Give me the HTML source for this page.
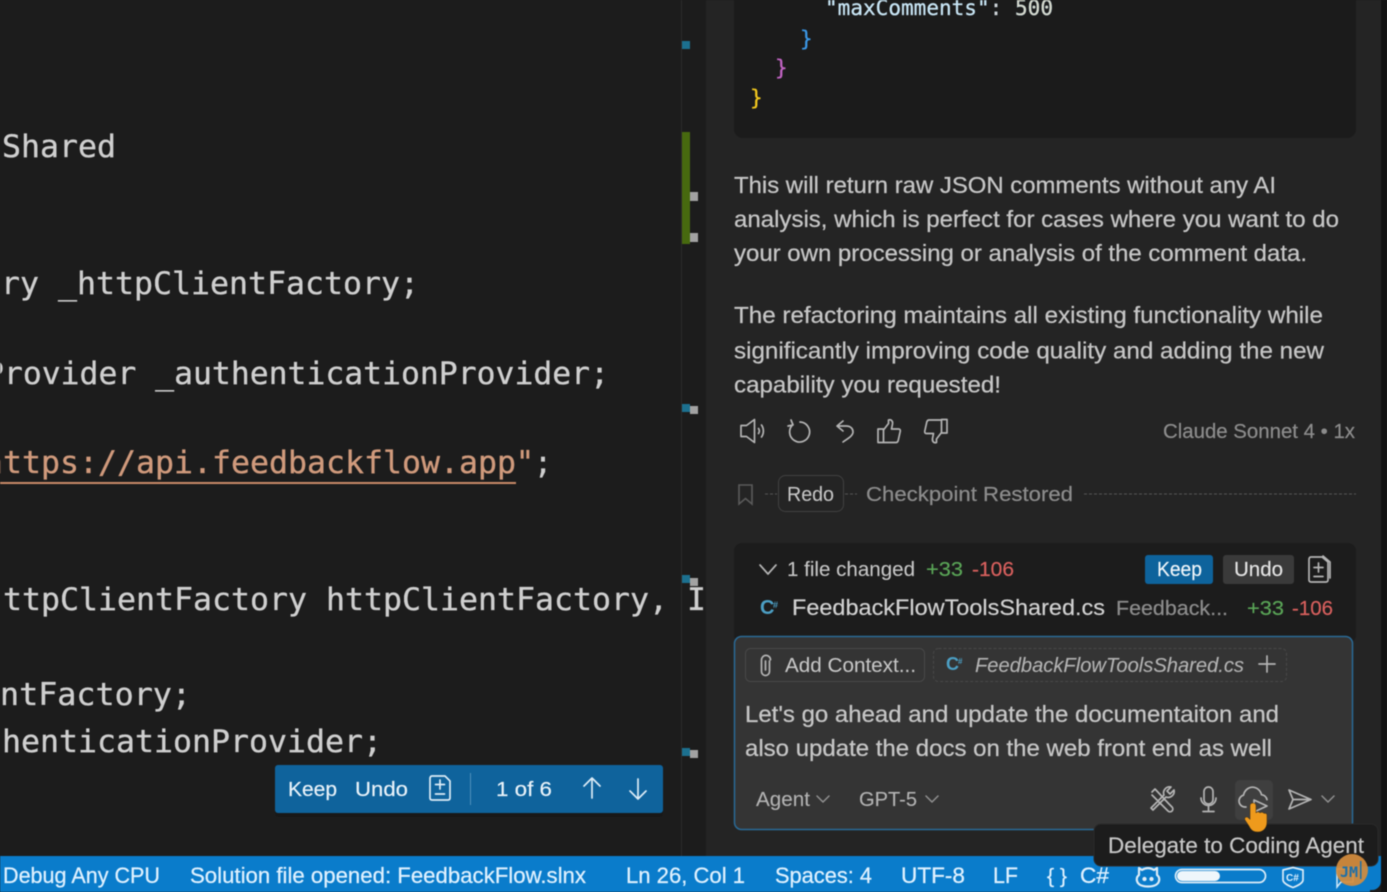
<!DOCTYPE html>
<html><head><meta charset="utf-8"><title>Editor</title>
<style>
html,body{margin:0;padding:0;background:#1c1c1c;width:1387px;height:892px;overflow:hidden}
svg{display:block;filter:blur(.45px)}
.m{font-family:"DejaVu Sans Mono","Liberation Mono",monospace;font-size:31.4px;fill:#cfcfcf;stroke:#cfcfcf;stroke-width:.35}
.j{font-family:"DejaVu Sans Mono","Liberation Mono",monospace;font-size:21px;stroke:currentColor;stroke-width:.3}
.s{font-family:"Liberation Sans",sans-serif;font-size:23px;fill:#c6c6c6;stroke:#c6c6c6;stroke-width:.25}
.u{font-family:"Liberation Sans",sans-serif;font-size:20.5px;fill:#c8c8c8;stroke:#999;stroke-width:.18}
.g{fill:#8c8c8c}
.st{font-family:"Liberation Sans",sans-serif;font-size:22px;fill:#dff1ff;stroke:#dff1ff;stroke-width:.25}
.i{fill:none;stroke:#b4b4b4;stroke-width:1.7;stroke-linecap:round;stroke-linejoin:round}
.w{fill:none;stroke:#dcecf7;stroke-width:1.7;stroke-linecap:round;stroke-linejoin:round}
</style></head><body>
<svg xmlns="http://www.w3.org/2000/svg" width="1387" height="892" viewBox="0 0 1387 892">
<rect width="1387" height="892" fill="#1c1c1c"/>
<rect x="681" width="1" height="857" fill="#2b2b2b"/>
<rect x="706" width="675" height="857" fill="#242424"/>
<rect x="1381" width="6" height="892" fill="#121212"/>

<!-- Editor code -->
<text class="m" x="2" y="157" textLength="114" lengthAdjust="spacingAndGlyphs">Shared</text>
<text class="m" x="1" y="294" textLength="418" lengthAdjust="spacingAndGlyphs">ry _httpClientFactory;</text>
<text class="m" x="-15" y="384" textLength="624" lengthAdjust="spacingAndGlyphs">Provider _authenticationProvider;</text>
<text class="m" x="-16" y="473" textLength="532" lengthAdjust="spacingAndGlyphs" style="fill:#d09a7c;stroke:#d09a7c">https://api.feedbackflow.app</text>
<text class="m" x="516" y="473" textLength="36" lengthAdjust="spacingAndGlyphs"><tspan style="fill:#d09a7c;stroke:#d09a7c">"</tspan>;</text>
<rect x="0" y="482" width="516" height="2" fill="#c98a68"/>
<text class="m" x="3" y="610" textLength="703" lengthAdjust="spacingAndGlyphs">ttpClientFactory httpClientFactory, I</text>
<text class="m" x="0" y="705" textLength="191" lengthAdjust="spacingAndGlyphs">ntFactory;</text>
<text class="m" x="2" y="752" textLength="380" lengthAdjust="spacingAndGlyphs">henticationProvider;</text>

<!-- Overview ruler -->
<rect x="682" y="41" width="8" height="8" fill="#1c708f"/>
<rect x="682" y="132" width="8" height="112" fill="#47690f"/>
<rect x="690" y="192" width="8" height="9" fill="#a2a2a2"/>
<rect x="690" y="233" width="8" height="9" fill="#a2a2a2"/>
<rect x="682" y="404" width="8" height="8" fill="#1c708f"/>
<rect x="690" y="406" width="8" height="8" fill="#a2a2a2"/>
<rect x="682" y="575" width="8" height="8" fill="#1c708f"/>
<rect x="690" y="578" width="8" height="8" fill="#a2a2a2"/>
<rect x="682" y="748" width="8" height="8" fill="#1c708f"/>
<rect x="690" y="750" width="8" height="8" fill="#a2a2a2"/>

<!-- JSON block -->
<rect x="734" y="-20" width="622" height="158" rx="9" fill="#1b1b1b"/>
<text class="j" x="825" y="15" textLength="228" lengthAdjust="spacingAndGlyphs" fill="#d4d4d4" color="#c8e2f0"><tspan fill="#c8e6f6">"maxComments"</tspan>: <tspan fill="#d8d8c8">500</tspan></text>
<text class="j" x="800" y="46" fill="#3b97e6" color="#3b97e6">}</text>
<text class="j" x="775" y="75" fill="#c264c4" color="#c264c4">}</text>
<text class="j" x="750" y="105" fill="#f2c81e" color="#f2c81e">}</text>

<!-- Chat text -->
<text class="s" x="734" y="193" textLength="542" lengthAdjust="spacingAndGlyphs">This will return raw JSON comments without any AI</text>
<text class="s" x="734" y="227" textLength="605" lengthAdjust="spacingAndGlyphs">analysis, which is perfect for cases where you want to do</text>
<text class="s" x="734" y="261" textLength="573" lengthAdjust="spacingAndGlyphs">your own processing or analysis of the comment data.</text>
<text class="s" x="734" y="323" textLength="589" lengthAdjust="spacingAndGlyphs">The refactoring maintains all existing functionality while</text>
<text class="s" x="734" y="358.5" textLength="590" lengthAdjust="spacingAndGlyphs">significantly improving code quality and adding the new</text>
<text class="s" x="734" y="392.5" textLength="267" lengthAdjust="spacingAndGlyphs">capability you requested!</text>

<!-- Response action icons -->
<g class="i">
<path d="M741 425.5h5.5l8-6v23l-8-6H741z"/>
<path d="M758.5 428.5c1 1.500 1 3.500 0 5M761.500 425c2.500 3.500 2.500 8.500 0 12"/>
<path d="M793 424.500a10 10 0 1 0 7-2.500M791 420l2 5-5 1"/>
<path d="M843 421l-6 5 6 5M838 426h8c5 0 7 3 7 6 0 4-6 7-10 10"/>
<path d="M878 429h5.500v13.500H878zM883.500 430l5-6.500V420c2.500-1 4.500 1 4 4l-1 5h7c1.500 0 2 1 1.700 2.500l-2 9c-.3 1-1 2-2.200 2h-12.500"/>
<path d="M947 419.500h-5.500V433h5.500zM941.500 432.500l-5 6.500v3.500c-2.500 1-4.500-1-4-4l1-5h-7c-1.500 0-2-1-1.700-2.500l2-9c.3-1 1-2 2.200-2h12.500"/>
</g>
<text class="u g" x="1163" y="438" textLength="192" lengthAdjust="spacingAndGlyphs">Claude Sonnet 4 • 1x</text>

<!-- Checkpoint -->
<path d="M739 485h13v19l-6.500-5.500-6.500 5.500z" fill="none" stroke="#5a5a5a" stroke-width="1.600"/>
<path d="M765 494h12M845 494h12M1084 494h272" stroke="#565656" stroke-width="1" stroke-dasharray="3 2" fill="none"/>
<rect x="778.500" y="475.500" width="65" height="36" rx="7" fill="none" stroke="#414141"/>
<text class="u" x="787" y="501" textLength="47" lengthAdjust="spacingAndGlyphs">Redo</text>
<text class="u g" x="866" y="501" textLength="207" lengthAdjust="spacingAndGlyphs">Checkpoint Restored</text>

<!-- Changed files -->
<rect x="734" y="543" width="622" height="100" rx="8" fill="#1c1c1c"/>
<path d="M760 565l8 9 8-9" class="i"/>
<text class="u" x="787" y="576" textLength="128" lengthAdjust="spacingAndGlyphs">1 file changed</text>
<text class="u" x="926" y="576" textLength="37" lengthAdjust="spacingAndGlyphs" style="fill:#5aa557;stroke:#5aa557">+33</text>
<text class="u" x="972" y="576" textLength="42" lengthAdjust="spacingAndGlyphs" style="fill:#d9605e;stroke:#d9605e">-106</text>
<rect x="1145" y="555" width="68" height="29" rx="3" fill="#0e639c"/>
<text class="u" x="1157" y="576" textLength="45" lengthAdjust="spacingAndGlyphs" style="fill:#f0f6fa;stroke:#f0f6fa">Keep</text>
<rect x="1223" y="555" width="71" height="29" rx="3" fill="#3a3a3a"/>
<text class="u" x="1234" y="576" textLength="49" lengthAdjust="spacingAndGlyphs" style="fill:#e4e4e4;stroke:#e4e4e4">Undo</text>
<g class="i"><path d="M1309 560v20c0 1 .7 2 2 2h15c1.300 0 2-1 2-2v-18l-6-5h-11c-1.300 0-2 1-2 3zM1323 556l7 6v16M1318.500 563v9M1314 567.500h9M1314 576.500h9"/></g>
<text x="760" y="614" style="font-family:'Liberation Sans',sans-serif;font-size:20px;font-weight:700;fill:#4c9fc4">C</text>
<text x="773" y="608" style="font-family:'Liberation Sans',sans-serif;font-size:9px;font-weight:700;fill:#4c9fc4">#</text>
<text class="u" x="792" y="615" textLength="313" lengthAdjust="spacingAndGlyphs" style="font-size:22.500px;fill:#d2d2d2;stroke:#d2d2d2">FeedbackFlowToolsShared.cs</text>
<text class="u g" x="1116" y="615" textLength="112" lengthAdjust="spacingAndGlyphs">Feedback...</text>
<text class="u" x="1247" y="615" textLength="37" lengthAdjust="spacingAndGlyphs" style="fill:#5aa557;stroke:#5aa557">+33</text>
<text class="u" x="1292" y="615" textLength="41" lengthAdjust="spacingAndGlyphs" style="fill:#d9605e;stroke:#d9605e">-106</text>

<!-- Input -->
<rect x="734.500" y="636.500" width="618" height="193" rx="7" fill="#343434" stroke="#2a6a96" stroke-width="1.500"/>
<rect x="745.500" y="648.500" width="179" height="33" rx="5" fill="none" stroke="#484848"/>
<path d="M769.500 661v10.500a4 4 0 0 1-8 0V660a4.500 4.500 0 0 1 9-.2M765.500 661v9" class="i"/>
<text class="u" x="785" y="672" textLength="131" lengthAdjust="spacingAndGlyphs">Add Context...</text>
<rect x="933.500" y="648.500" width="353" height="33" rx="5" fill="none" stroke="#484848" stroke-dasharray="3 2"/>
<text x="946" y="670" style="font-family:'Liberation Sans',sans-serif;font-size:18px;font-weight:700;fill:#4c9fc4">C</text>
<text x="958" y="664" style="font-family:'Liberation Sans',sans-serif;font-size:8px;font-weight:700;fill:#4c9fc4">#</text>
<text class="u" x="975" y="672" textLength="269" lengthAdjust="spacingAndGlyphs" style="font-style:italic;fill:#b4b4b4">FeedbackFlowToolsShared.cs</text>
<path d="M1267 656v16M1259 664h16" class="i"/>
<text class="s" x="745" y="722" textLength="534" lengthAdjust="spacingAndGlyphs">Let's go ahead and update the documentaiton and</text>
<text class="s" x="745" y="756" textLength="527" lengthAdjust="spacingAndGlyphs">also update the docs on the web front end as well</text>
<text class="u" x="756" y="806" textLength="54" lengthAdjust="spacingAndGlyphs" style="fill:#b4b4b4">Agent</text>
<path d="M817 796l6 6 6-6M926 796l6 6 6-6M1322 796l6 6 6-6" fill="none" stroke="#909090" stroke-width="1.500" stroke-linecap="round" stroke-linejoin="round"/>
<text class="u" x="859" y="806" textLength="58" lengthAdjust="spacingAndGlyphs" style="fill:#b4b4b4">GPT-5</text>
<rect x="1235" y="780" width="38" height="40" rx="5" fill="#3f3f3f"/>
<g class="i">
<path d="M1152 792l3-3 14 15 3 3a2 2 0 0 1-4 4l-16-16M1155 789l-3 3M1174 790l-4 4-3-3 4-4a6 6 0 0 0-7 8l-13 13 2 2 13-13a6 6 0 0 0 8-7z"/>
<rect x="1204" y="787" width="9" height="17" rx="4.500"/>
<path d="M1201 798a7.500 7.500 0 0 0 15 0M1208.500 806v5M1203 811.500h11"/>
<path d="M1246 807h-1a6 6 0 0 1-1.500-11.800c1-5 5-8 9-8s8 3 9 7.500c3 .5 5 2.500 5.500 5"/>
<path d="M1254 800l13 6-13 6z"/>
<path d="M1289 790l22 9.500-22 9.500 4-9.500zM1293 799.500h18"/>
</g>

<!-- Floating bar -->
<rect x="275" y="768" width="388" height="49" rx="4" fill="#111" opacity=".35"/>
<rect x="275" y="765" width="388" height="48" rx="3" fill="#0f639c"/>
<text class="u" x="288" y="796" textLength="49" lengthAdjust="spacingAndGlyphs" style="fill:#e9f3fa;stroke:#e9f3fa">Keep</text>
<text class="u" x="355" y="796" textLength="53" lengthAdjust="spacingAndGlyphs" style="fill:#e9f3fa;stroke:#e9f3fa">Undo</text>
<g class="w">
<path d="M430 779v19c0 1.300.8 2 2 2h16c1.200 0 2-.7 2-2v-17l-5-5h-13c-1.200 0-2 1-2 3zM440 780v9M435.500 784.500h9M435.500 794h9"/>
<path d="M592 798v-19M584 786l8-8 8 8M638 779v19M630 791l8 8 8-8"/>
</g>
<rect x="470" y="773" width="1" height="32" fill="#4f8fbb"/>
<text class="u" x="496" y="796" textLength="56" lengthAdjust="spacingAndGlyphs" style="fill:#e9f3fa;stroke:#e9f3fa">1 of 6</text>

<!-- Status bar -->
<path d="M0 856h1381v25a9 9 0 0 1-9 9l-1372 2z" fill="#0a7ccb"/>
<rect x="0" y="870" width="1370" height="22" fill="#0a7ccb"/>
<text class="st" x="3" y="883" textLength="157" lengthAdjust="spacingAndGlyphs">Debug Any CPU</text>
<text class="st" x="190" y="883" textLength="396" lengthAdjust="spacingAndGlyphs">Solution file opened: FeedbackFlow.slnx</text>
<text class="st" x="626" y="883" textLength="119" lengthAdjust="spacingAndGlyphs">Ln 26, Col 1</text>
<text class="st" x="775" y="883" textLength="97" lengthAdjust="spacingAndGlyphs">Spaces: 4</text>
<text class="st" x="901" y="883" textLength="64" lengthAdjust="spacingAndGlyphs">UTF-8</text>
<text class="st" x="993" y="883" textLength="25" lengthAdjust="spacingAndGlyphs">LF</text>
<text class="st" x="1047" y="883" textLength="20" lengthAdjust="spacingAndGlyphs" style="font-size:20px">{ }</text>
<text class="st" x="1080" y="883" textLength="29" lengthAdjust="spacingAndGlyphs">C#</text>
<g class="w">
<path d="M1142 870l-3-2v7c-2 1.500-2.500 4-2 6 1 4 6 5.500 11 5.500s10-1.500 11-5.500c.5-2 0-4.500-2-6v-7l-3 2c-4-2.500-8-2.500-12 0z" style="stroke-width:2.200"/>
<circle cx="1144.500" cy="879" r="1.300" style="fill:#dcecf7"/><circle cx="1151.500" cy="879" r="1.300" style="fill:#dcecf7"/>
<rect x="1175.500" y="869.500" width="90" height="13" rx="6.500"/>
<path d="M1283 870l10-2.500 10 2.500v10c0 3-6 6-10 7.500-4-1.500-10-4.500-10-7.500z"/>
</g>
<rect x="1177" y="871" width="43" height="10" rx="5" fill="#eef6fb"/>
<text x="1286" y="881" style="font-family:'Liberation Sans',sans-serif;font-size:10px;font-weight:700;fill:#dff1ff">C#</text>

<!-- Tooltip -->
<rect x="1094" y="824" width="284" height="42" rx="7" fill="#1c1c1c" stroke="#2a2a2a"/>
<text class="u" x="1108" y="853" textLength="256" lengthAdjust="spacingAndGlyphs" style="font-size:22px;fill:#c8c8c8;stroke:#c8c8c8">Delegate to Coding Agent</text>

<!-- Hand cursor -->
<path d="M1250 806c0-4 6-4 6 0v7c1-1.500 3-1.500 4 0 1-1 3-1 4 .5 1-.5 3 0 3 1.500v7c0 6-4 10-9 10s-7-2-9-6l-4-6c-1-2 1-4 3-2.500l2 2z" fill="#ee9a1c" stroke="#3a2a10" stroke-width=".5"/>

<!-- Bell + avatar -->
<path d="M1337 869h16v13h-12l-4 5z" fill="none" stroke="#cfe8f8" stroke-width="1.500"/>
<circle cx="1352" cy="870" r="16" fill="#d38c3d" opacity=".93"/>
<text x="1340" y="877" style="font-family:'DejaVu Sans Mono',monospace;font-size:14px;font-weight:700;fill:#1c6fa8" textLength="18" lengthAdjust="spacingAndGlyphs">JM</text>
<rect x="1360" y="861" width="1.500" height="18" fill="#1c6fa8"/>
</svg>
</body></html>
